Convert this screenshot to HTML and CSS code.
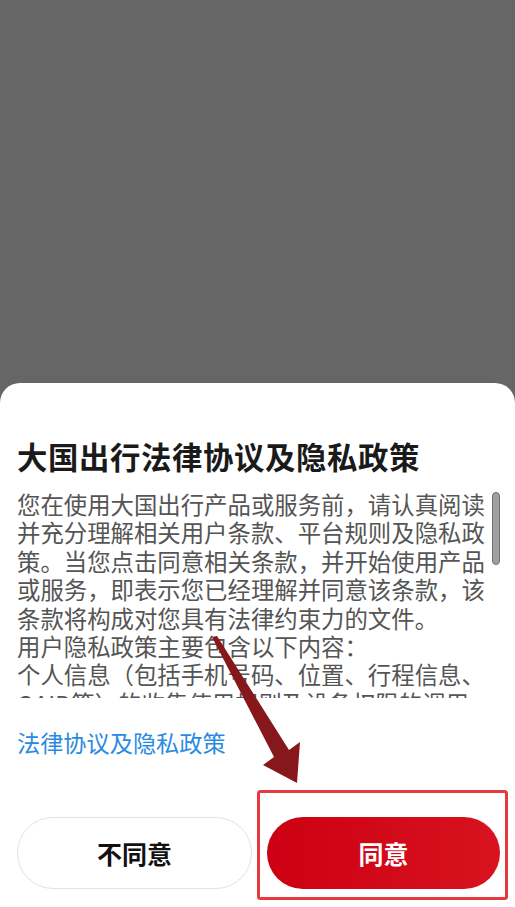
FILE: index.html
```html
<!DOCTYPE html>
<html lang="zh-CN">
<head>
<meta charset="utf-8">
<title>大国出行法律协议及隐私政策</title>
<link rel="stylesheet" href="styles.css">
</head>
<body>
<div class="screen">
  <div class="sheet">
    <h1 class="title">大国出行法律协议及隐私政策</h1>
    <div class="scroll">
      <p class="body-text">您在使用大国出行产品或服务前，请认真阅读并充分理解相关用户条款、平台规则及隐私政策。当您点击同意相关条款，并开始使用产品或服务，即表示您已经理解并同意该条款，该条款将构成对您具有法律约束力的文件。<br>用户隐私政策主要包含以下内容：<br>个人信息（包括手机号码、位置、行程信息、OAID等）的收集使用规则及设备权限的调用情况说明，以及您享有的个人信息相关权利。您可以阅读完整版法律协议及隐私政策了解详细信息。如您同意，请点击“同意”开始接受我们的服务。</p>
      <div class="thumb"></div>
    </div>
    <a class="link" href="#">法律协议及隐私政策</a>
    <div class="actions">
      <button class="btn btn-ghost">不同意</button>
      <button class="btn btn-primary">同意</button>
    </div>
  </div>
</div>
<svg class="annot" width="515" height="907" viewBox="0 0 515 907" aria-hidden="true">
  <polygon points="212,637 217,636 289,750 300,742 297,783 263,765 274,757" fill="#86171a"/>
  <rect x="258.5" y="791.5" width="248" height="107" rx="2" fill="none" stroke="#e8393f" stroke-width="3"/>
</svg>
</body>
</html>
```
FILE: styles.css
```css
* { box-sizing: border-box; }
html, body { margin: 0; padding: 0; }
body {
  width: 515px;
  height: 907px;
  background: #666666;
  font-family: "Noto Sans CJK SC", "Noto Sans", sans-serif;
  overflow: hidden;
  position: relative;
}
.screen {
  height: 907px;
  display: flex;
  flex-direction: column;
  justify-content: flex-end;
}
.sheet {
  height: 524px;
  background: #ffffff;
  border-radius: 20px 20px 0 0;
  padding: 53px 15px 18px 17px;
  display: flex;
  flex-direction: column;
}
.title {
  margin: 0;
  font-size: 30.4px;
  line-height: 40px;
  font-weight: 700;
  color: #1a1a1a;
  letter-spacing: 0.6px;
}
.scroll {
  margin-top: 14px;
  height: 208px;
  overflow: hidden;
  position: relative;
  padding-right: 15px;
}
.body-text {
  margin: 0;
  font-size: 23.4px;
  line-height: 28.4px;
  color: #555555;
}
.thumb {
  position: absolute;
  right: 0;
  top: 2px;
  width: 8px;
  height: 73px;
  border-radius: 4px;
  background: #a0a0a0;
  border: 1.5px solid #6e6e6e;
}
.link {
  margin-top: 30px;
  font-size: 23.2px;
  line-height: 28px;
  color: #2a8ae2;
  text-decoration: none;
  align-self: flex-start;
}
.actions {
  margin-top: 61px;
  display: flex;
  gap: 15px;
}
.btn {
  flex: 1;
  height: 72px;
  border-radius: 36px;
  font-family: "Noto Sans CJK SC", "Noto Sans", sans-serif;
  font-size: 25px;
  font-weight: 700;
  cursor: pointer;
}
.btn-ghost {
  background: #ffffff;
  color: #111111;
  border: 1px solid #e2e2e2;
}
.btn-primary {
  background: linear-gradient(90deg, #cc0012, #d8121f);
  color: #ffffff;
  border: none;
}
.annot {
  position: absolute;
  left: 0;
  top: 0;
  pointer-events: none;
}
```
